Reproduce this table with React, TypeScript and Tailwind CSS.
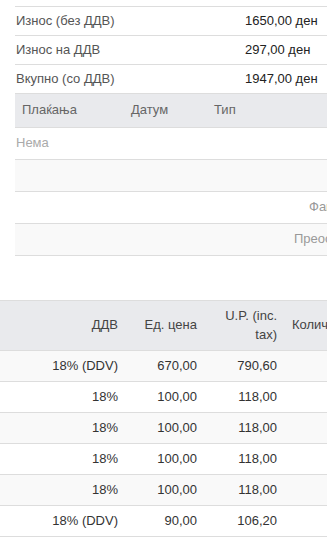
import React from 'react';

const totals = [
  { label: 'Износ (без ДДВ)', value: '1650,00 ден' },
  { label: 'Износ на ДДВ', value: '297,00 ден' },
  { label: 'Вкупно (со ДДВ)', value: '1947,00 ден' },
];

const items = [
  { vat: '18% (DDV)', price: '670,00', gross: '790,60' },
  { vat: '18%', price: '100,00', gross: '118,00' },
  { vat: '18%', price: '100,00', gross: '118,00' },
  { vat: '18%', price: '100,00', gross: '118,00' },
  { vat: '18%', price: '100,00', gross: '118,00' },
  { vat: '18% (DDV)', price: '90,00', gross: '106,20' },
];

const App = () => {
  return (
    <div className="w-[327px] h-[538px] overflow-hidden bg-white text-[13px] leading-[18.5px] text-[#333]" style={{ fontFamily: '"Liberation Sans", Arial, sans-serif' }}>
      <div className="pt-[6px] pl-[15px]">
        {/* totals */}
        <div className="w-[400px] border-t border-[#ddd]">
          {totals.map((t) => (
            <div key={t.label} className="flex h-[29px] items-center border-b border-[#ddd] pl-px">
              <div className="w-[229px] text-[#555]">{t.label}</div>
              <div className="text-[#222]">{t.value}</div>
            </div>
          ))}
        </div>

        {/* payments */}
        <div className="w-[400px]">
          <div className="flex h-[34px] items-center bg-[#e9eaed] border-b border-[#ddd] pl-[7px] text-[#666]">
            <div className="w-[109px]">Плаќања</div>
            <div className="w-[83px]">Датум</div>
            <div>Тип</div>
          </div>
          <div className="flex h-[32px] items-center border-b border-[#ddd] pl-px text-[#aaa]">Нема</div>
          <div className="h-[32px] bg-[#f9f9f9] border-b border-[#ddd]"></div>
          <div className="flex h-[32px] items-center border-b border-[#ddd] pl-[294px] text-[#999] whitespace-nowrap">Фактурирано</div>
          <div className="flex h-[32px] items-center bg-[#f9f9f9] border-b border-[#ddd] pl-[279px] text-[#999] whitespace-nowrap">Преостанато</div>
        </div>
      </div>

      {/* items */}
      <div className="mt-[44px] w-[420px] border-t border-[#ddd]">
        <div className="flex items-center bg-[#e9eaed] border-b border-[#ddd] text-[#444]">
          <div className="w-[125px] px-[7px] text-right">ДДВ</div>
          <div className="w-[79px] px-[7px] text-right">Ед. цена</div>
          <div className="w-[80px] px-[7px] py-[6px] text-right">U.P. (inc. tax)</div>
          <div className="px-[8px] whitespace-nowrap">Количина</div>
        </div>
        {items.map((r, i) => (
          <div key={i} className={`flex h-[31px] items-center border-b border-[#ddd] text-[#333] ${i % 2 === 0 ? 'bg-[#f9f9f9]' : 'bg-white'}`}>
            <div className="w-[125px] px-[7px] text-right">{r.vat}</div>
            <div className="w-[79px] px-[7px] text-right">{r.price}</div>
            <div className="w-[80px] px-[7px] text-right">{r.gross}</div>
          </div>
        ))}
      </div>
    </div>
  );
};

export default App;
